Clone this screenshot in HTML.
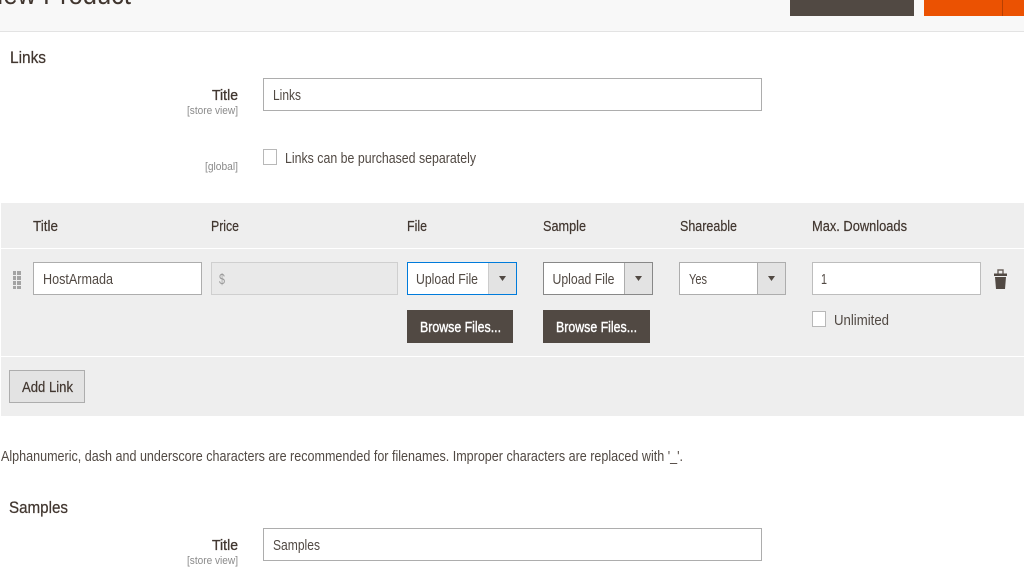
<!DOCTYPE html>
<html lang="en">
<head>
<meta charset="utf-8">
<title>New Product</title>
<style>
html,body{margin:0;padding:0;width:1024px;height:576px;overflow:hidden;background:#fff}
svg{display:block}
text{font-family:"Liberation Sans",sans-serif;fill:#41362f;font-size:15px}
.b{fill:#41362f;stroke:#41362f;stroke-width:.35px}
.l{fill:#41362f;stroke:#41362f;stroke-width:.2px}
.m{fill:#514943}
.s{font-size:11px;fill:#8a8a8a}
.h{font-size:17px;fill:#41362f;stroke:#41362f;stroke-width:.25px}
.w{fill:#fff;stroke:#fff;stroke-width:.4px}
</style>
</head>
<body>
<svg width="1024" height="576" viewBox="0 0 1024 576" xmlns="http://www.w3.org/2000/svg">
<rect x="0" y="0" width="1024" height="31" fill="#f8f8f8"/>
<rect x="0" y="31" width="1024" height="1" fill="#e3e3e3"/>
<text x="-15" y="4" style="font-size:29px;fill:#41362f" textLength="146" lengthAdjust="spacingAndGlyphs">New Product</text>
<rect x="790" y="0" width="124" height="16" fill="#514943"/>
<rect x="924" y="0" width="100" height="16" fill="#eb5202"/>
<rect x="1002" y="0" width="1" height="16" fill="#b84002"/>

<text class="h" x="10" y="63" textLength="36" lengthAdjust="spacingAndGlyphs">Links</text>
<text class="b" x="212" y="100" textLength="26" lengthAdjust="spacingAndGlyphs">Title</text>
<text class="s" x="187" y="114" textLength="51" lengthAdjust="spacingAndGlyphs">[store view]</text>
<rect x="263.5" y="78.5" width="498" height="32" fill="#fff" stroke="#adadad"/>
<text class="m" x="273" y="100" textLength="28" lengthAdjust="spacingAndGlyphs">Links</text>
<text class="s" x="205" y="170" textLength="33" lengthAdjust="spacingAndGlyphs">[global]</text>
<rect x="263.5" y="149.5" width="13" height="15" fill="#fff" stroke="#b8b8b8"/>
<text class="m" x="285" y="163" textLength="191" lengthAdjust="spacingAndGlyphs">Links can be purchased separately</text>

<rect x="1" y="203" width="1023" height="213" fill="#eeeeee"/>
<rect x="1" y="248" width="1023" height="1" fill="#fff"/>
<rect x="1" y="356" width="1023" height="1" fill="#fff"/>

<text class="l" x="33" y="231" textLength="25" lengthAdjust="spacingAndGlyphs">Title</text>
<text class="l" x="211" y="231" textLength="28" lengthAdjust="spacingAndGlyphs">Price</text>
<text class="l" x="407" y="231" textLength="20" lengthAdjust="spacingAndGlyphs">File</text>
<text class="l" x="543" y="231" textLength="43" lengthAdjust="spacingAndGlyphs">Sample</text>
<text class="l" x="680" y="231" textLength="57" lengthAdjust="spacingAndGlyphs">Shareable</text>
<text class="l" x="812" y="231" textLength="95" lengthAdjust="spacingAndGlyphs">Max. Downloads</text>

<g fill="#a3a3a3">
<rect x="13" y="271" width="3" height="4"/><rect x="17" y="271" width="4" height="4"/>
<rect x="13" y="276" width="3" height="4"/><rect x="17" y="276" width="4" height="4"/>
<rect x="13" y="281" width="3" height="4"/><rect x="17" y="281" width="4" height="4"/>
<rect x="13" y="286" width="3" height="3"/><rect x="17" y="286" width="4" height="3"/>
</g>

<rect x="33.5" y="262.5" width="168" height="32" fill="#fff" stroke="#adadad"/>
<text class="m" x="43" y="284" textLength="70" lengthAdjust="spacingAndGlyphs">HostArmada</text>

<rect x="211.5" y="262.5" width="186" height="32" fill="#e9e9e9" stroke="#cfcfcf"/>
<text x="219" y="284" style="fill:#999" textLength="6" lengthAdjust="spacingAndGlyphs">$</text>

<rect x="407.5" y="262.5" width="109" height="32" fill="#fff" stroke="#007bdb"/>
<rect x="488" y="263" width="28" height="31" fill="#e3e3e3"/>
<rect x="488" y="263" width="1" height="31" fill="#cccccc"/>
<text class="m" x="416" y="284" textLength="62" lengthAdjust="spacingAndGlyphs">Upload File</text>
<path d="M499 276h7l-3.5 5z" fill="#514943"/>

<rect x="543.5" y="262.5" width="109" height="32" fill="#fff" stroke="#888"/>
<rect x="624" y="263" width="28" height="31" fill="#e3e3e3"/>
<rect x="624" y="263" width="1" height="31" fill="#adadad"/>
<text class="m" x="552.5" y="284" textLength="62" lengthAdjust="spacingAndGlyphs">Upload File</text>
<path d="M635 276h7l-3.5 5z" fill="#514943"/>

<rect x="679.5" y="262.5" width="106" height="32" fill="#fff" stroke="#adadad"/>
<rect x="757" y="263" width="28" height="31" fill="#e3e3e3"/>
<rect x="757" y="263" width="1" height="31" fill="#adadad"/>
<text class="m" x="689" y="284" textLength="18" lengthAdjust="spacingAndGlyphs">Yes</text>
<path d="M768 276h7l-3.5 5z" fill="#514943"/>

<rect x="812.5" y="262.5" width="168" height="32" fill="#fff" stroke="#bdbdbd"/>
<text class="m" x="821" y="284" textLength="6" lengthAdjust="spacingAndGlyphs">1</text>

<path d="M994 273.5h13v2.5h-13z M995 277h11l-1 12h-9z" fill="#514943"/>
<path d="M998 273.5v-3.5h5v3.5" fill="none" stroke="#6b625c" stroke-width="1.4"/>

<rect x="812.5" y="311.5" width="13" height="15" fill="#fff" stroke="#b8b8b8"/>
<text class="m" x="834" y="325" textLength="55" lengthAdjust="spacingAndGlyphs">Unlimited</text>

<rect x="407" y="310" width="106" height="33" fill="#514943"/>
<text class="w" x="420" y="332" textLength="81" lengthAdjust="spacingAndGlyphs">Browse Files...</text>
<rect x="543" y="310" width="107" height="33" fill="#514943"/>
<text class="w" x="556" y="332" textLength="81" lengthAdjust="spacingAndGlyphs">Browse Files...</text>

<rect x="9.5" y="370.5" width="75" height="32" fill="#e3e3e3" stroke="#adadad"/>
<text class="l" x="22" y="392" textLength="51" lengthAdjust="spacingAndGlyphs">Add Link</text>

<text class="m" x="1" y="461" textLength="682" lengthAdjust="spacingAndGlyphs">Alphanumeric, dash and underscore characters are recommended for filenames. Improper characters are replaced with '_'.</text>

<text class="h" x="9" y="513" textLength="59" lengthAdjust="spacingAndGlyphs">Samples</text>
<text class="b" x="212" y="550" textLength="26" lengthAdjust="spacingAndGlyphs">Title</text>
<text class="s" x="187" y="564" textLength="51" lengthAdjust="spacingAndGlyphs">[store view]</text>
<rect x="263.5" y="528.5" width="498" height="32" fill="#fff" stroke="#adadad"/>
<text class="m" x="273" y="550" textLength="47" lengthAdjust="spacingAndGlyphs">Samples</text>
</svg>
</body>
</html>
